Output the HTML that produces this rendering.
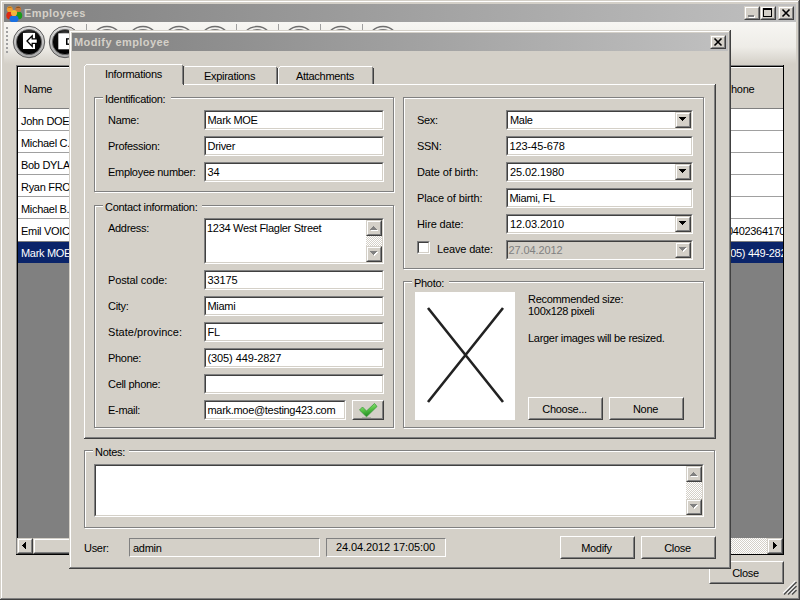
<!DOCTYPE html><html><head><meta charset="utf-8"><style>
html,body{margin:0;padding:0;width:800px;height:600px;overflow:hidden;background:#d4d0c8}
.a{position:absolute;box-sizing:content-box}
.t{font-family:"Liberation Sans",sans-serif;font-size:11px;line-height:13px;letter-spacing:-0.3px;white-space:nowrap;color:#000}
.b{font-family:"Liberation Sans",sans-serif;font-size:11px;line-height:13px;font-weight:bold;letter-spacing:0.42px;white-space:nowrap}
</style></head><body>
<div class="a" style="left:0px;top:0px;width:800px;height:600px;background:#d4d0c8"></div>
<div class="a" style="left:1px;top:1px;width:797px;height:1px;background:#fff"></div>
<div class="a" style="left:1px;top:1px;width:1px;height:597px;background:#fff"></div>
<div class="a" style="left:798px;top:1px;width:1px;height:598px;background:#808080"></div>
<div class="a" style="left:1px;top:598px;width:798px;height:1px;background:#808080"></div>
<div class="a" style="left:799px;top:0px;width:1px;height:600px;background:#404040"></div>
<div class="a" style="left:0px;top:599px;width:800px;height:1px;background:#404040"></div>
<div class="a" style="left:4px;top:4px;width:792px;height:18px;background:linear-gradient(to right,#808080,#c0c0c0)"></div>
<div class="a b" style="left:24px;top:7px;color:#d4d0c8">Employees</div>
<svg class="a" style="left:5px;top:4px" width="18" height="18" viewBox="0 0 18 18">
<ellipse cx="4.5" cy="11.5" rx="3.2" ry="3.8" fill="#e02a10"/>
<ellipse cx="14" cy="11.5" rx="3.2" ry="3.8" fill="#1a9a1a"/>
<circle cx="4.8" cy="5.2" r="2.9" fill="#f0a030"/><path d="M2 4.5 Q4.8 0.8 7.6 4.5 Q4.8 3 2 4.5Z" fill="#b86a10"/>
<circle cx="13.2" cy="5.2" r="2.9" fill="#c87838"/><path d="M10.3 4.5 Q13.2 0.8 16 4.5 Q13.2 3 10.3 4.5Z" fill="#7a4a20"/>
<ellipse cx="9" cy="15" rx="4.6" ry="3.4" fill="#1a70e0"/>
<circle cx="9" cy="9" r="3.1" fill="#f4b040"/><path d="M5.9 8.5 Q9 4.8 12.1 8.5 Q9 6.8 5.9 8.5Z" fill="#f0d020"/>
</svg>
<div class="a" style="left:744px;top:6px;width:14px;height:12px;border:1px solid;border-color:#d4d0c8 #404040 #404040 #d4d0c8;"><div style="width:12px;height:10px;border:1px solid;border-color:#fff #808080 #808080 #fff;background:#d4d0c8"></div></div>
<div class="a" style="left:760px;top:6px;width:14px;height:12px;border:1px solid;border-color:#d4d0c8 #404040 #404040 #d4d0c8;"><div style="width:12px;height:10px;border:1px solid;border-color:#fff #808080 #808080 #fff;background:#d4d0c8"></div></div>
<div class="a" style="left:778px;top:6px;width:14px;height:12px;border:1px solid;border-color:#d4d0c8 #404040 #404040 #d4d0c8;"><div style="width:12px;height:10px;border:1px solid;border-color:#fff #808080 #808080 #fff;background:#d4d0c8"></div></div>
<div class="a" style="left:749px;top:16px;width:6px;height:2px;background:#fff"></div>
<div class="a" style="left:748px;top:15px;width:6px;height:2px;background:#808080"></div>
<div class="a" style="left:763px;top:8px;width:8px;height:8px;border:1px solid #000;border-top-width:2px;box-sizing:border-box;width:9px;height:9px"></div>
<svg class="a" style="left:778px;top:6px" width="16" height="14"><path d="M4.5 3.5 L11.5 10.5 M11.5 3.5 L4.5 10.5" stroke="#000" stroke-width="1.6"/></svg>
<div class="a" style="left:4px;top:22px;width:792px;height:42px;background:linear-gradient(to bottom,#f7f6f3 0%,#eeece7 60%,#d4d0c8 100%)"></div>
<div class="a" style="left:6px;top:27px;width:2px;height:2px;background:#a0a0a0"></div>
<div class="a" style="left:6px;top:31px;width:2px;height:2px;background:#a0a0a0"></div>
<div class="a" style="left:6px;top:35px;width:2px;height:2px;background:#a0a0a0"></div>
<div class="a" style="left:6px;top:39px;width:2px;height:2px;background:#a0a0a0"></div>
<div class="a" style="left:6px;top:43px;width:2px;height:2px;background:#a0a0a0"></div>
<div class="a" style="left:6px;top:47px;width:2px;height:2px;background:#a0a0a0"></div>
<div class="a" style="left:6px;top:51px;width:2px;height:2px;background:#a0a0a0"></div>
<svg class="a" style="left:12px;top:25px" width="34" height="34" viewBox="0 0 34 34">
<defs><linearGradient id="rg" x1="0" y1="0" x2="0" y2="1"><stop offset="0" stop-color="#dcdcdc"/><stop offset="1" stop-color="#a8a8a8"/></linearGradient>
<radialGradient id="dg" cx="0.5" cy="0.25" r="0.7"><stop offset="0" stop-color="#5a5a5a"/><stop offset="0.45" stop-color="#0a0a0a"/><stop offset="1" stop-color="#000"/></radialGradient></defs>
<circle cx="17" cy="17" r="15.7" fill="url(#rg)" stroke="#5e5e5e" stroke-width="1"/>
<circle cx="17" cy="17" r="12.6" fill="url(#dg)" stroke="#6a6a6a" stroke-width="0.8"/>
<path d="M11 8 L23 8 L23 24 L11 24 Z" fill="#fff"/>
<path d="M15 16 L20.2 10.8 L20.2 13.8 L25.4 13.8 L25.4 18.4 L20.2 18.4 L20.2 21.4 Z" fill="#fff" stroke="#000" stroke-width="1.3" stroke-linejoin="miter"/>
</svg>
<svg class="a" style="left:48px;top:25px" width="34" height="34" viewBox="0 0 34 34">
<circle cx="17" cy="17" r="15.7" fill="url(#rg)" stroke="#5e5e5e" stroke-width="1"/>
<circle cx="17" cy="17" r="12.6" fill="url(#dg)" stroke="#6a6a6a" stroke-width="0.8"/>
<path d="M10.3 8.3 L24 8.3 L24 24.3 L10.3 24.3 Z" fill="#fff"/>
<rect x="18" y="13.2" width="6" height="6.7" fill="#000"/>
<rect x="19.5" y="14.5" width="4.5" height="4" fill="#fff"/>
</svg>
<svg class="a" style="left:90px;top:25px" width="34" height="34" viewBox="0 0 34 34">
<circle cx="17" cy="17" r="15.5" fill="#f2f1ee" stroke="#6e6e6e" stroke-width="1.3"/>
<circle cx="17" cy="17.5" r="12.8" fill="none" stroke="#7a7a7a" stroke-width="1.2"/>
</svg>
<svg class="a" style="left:126px;top:25px" width="34" height="34" viewBox="0 0 34 34">
<circle cx="17" cy="17" r="15.5" fill="#f2f1ee" stroke="#6e6e6e" stroke-width="1.3"/>
<circle cx="17" cy="17.5" r="12.8" fill="none" stroke="#7a7a7a" stroke-width="1.2"/>
</svg>
<svg class="a" style="left:162px;top:25px" width="34" height="34" viewBox="0 0 34 34">
<circle cx="17" cy="17" r="15.5" fill="#f2f1ee" stroke="#6e6e6e" stroke-width="1.3"/>
<circle cx="17" cy="17.5" r="12.8" fill="none" stroke="#7a7a7a" stroke-width="1.2"/>
</svg>
<svg class="a" style="left:198px;top:25px" width="34" height="34" viewBox="0 0 34 34">
<circle cx="17" cy="17" r="15.5" fill="#f2f1ee" stroke="#6e6e6e" stroke-width="1.3"/>
<circle cx="17" cy="17.5" r="12.8" fill="none" stroke="#7a7a7a" stroke-width="1.2"/>
</svg>
<svg class="a" style="left:240px;top:25px" width="34" height="34" viewBox="0 0 34 34">
<circle cx="17" cy="17" r="15.5" fill="#f2f1ee" stroke="#6e6e6e" stroke-width="1.3"/>
<circle cx="17" cy="17.5" r="12.8" fill="none" stroke="#7a7a7a" stroke-width="1.2"/>
</svg>
<svg class="a" style="left:282px;top:25px" width="34" height="34" viewBox="0 0 34 34">
<circle cx="17" cy="17" r="15.5" fill="#f2f1ee" stroke="#6e6e6e" stroke-width="1.3"/>
<circle cx="17" cy="17.5" r="12.8" fill="none" stroke="#7a7a7a" stroke-width="1.2"/>
</svg>
<svg class="a" style="left:324px;top:25px" width="34" height="34" viewBox="0 0 34 34">
<circle cx="17" cy="17" r="15.5" fill="#f2f1ee" stroke="#6e6e6e" stroke-width="1.3"/>
<circle cx="17" cy="17.5" r="12.8" fill="none" stroke="#7a7a7a" stroke-width="1.2"/>
</svg>
<svg class="a" style="left:366px;top:25px" width="34" height="34" viewBox="0 0 34 34">
<circle cx="17" cy="17" r="15.5" fill="#f2f1ee" stroke="#6e6e6e" stroke-width="1.3"/>
<circle cx="17" cy="17.5" r="12.8" fill="none" stroke="#7a7a7a" stroke-width="1.2"/>
</svg>
<div class="a" style="left:86px;top:24px;width:1px;height:6px;background:#a0a0a0"></div>
<div class="a" style="left:236px;top:24px;width:1px;height:6px;background:#a0a0a0"></div>
<div class="a" style="left:278px;top:24px;width:1px;height:6px;background:#a0a0a0"></div>
<div class="a" style="left:320px;top:24px;width:1px;height:6px;background:#a0a0a0"></div>
<div class="a" style="left:362px;top:24px;width:1px;height:6px;background:#a0a0a0"></div>
<div class="a" style="left:16px;top:65px;width:768px;height:490px;background:#808080"></div>
<div class="a" style="left:16px;top:65px;width:768px;height:1px;background:#808080"></div>
<div class="a" style="left:16px;top:65px;width:1px;height:490px;background:#808080"></div>
<div class="a" style="left:17px;top:66px;width:766px;height:1px;background:#000"></div>
<div class="a" style="left:17px;top:66px;width:1px;height:489px;background:#000"></div>
<div class="a" style="left:783px;top:65px;width:1px;height:490px;background:#000"></div>
<div class="a" style="left:16px;top:554px;width:768px;height:1px;background:#000"></div>
<div class="a" style="left:18px;top:67px;width:765px;height:42px;background:#d4d0c8"></div>
<div class="a" style="left:18px;top:67px;width:765px;height:1px;background:#fff"></div>
<div class="a" style="left:18px;top:67px;width:1px;height:41px;background:#fff"></div>
<div class="a" style="left:18px;top:108px;width:765px;height:1px;background:#808080"></div>
<div class="a t" style="left:24px;top:83px;">Name</div>
<div class="a t" style="left:731px;top:83px;">hone</div>
<div class="a" style="left:18px;top:109px;width:765px;height:22px;background:#fff"></div>
<div class="a" style="left:18px;top:130px;width:765px;height:1px;background:#a0a0a0"></div>
<div class="a t" style="left:21px;top:114.5px;">John DOE</div>
<div class="a" style="left:18px;top:131px;width:765px;height:22px;background:#fff"></div>
<div class="a" style="left:18px;top:152px;width:765px;height:1px;background:#a0a0a0"></div>
<div class="a t" style="left:21px;top:136.5px;">Michael C.</div>
<div class="a" style="left:18px;top:153px;width:765px;height:22px;background:#fff"></div>
<div class="a" style="left:18px;top:174px;width:765px;height:1px;background:#a0a0a0"></div>
<div class="a t" style="left:21px;top:158.5px;">Bob DYLAN</div>
<div class="a" style="left:18px;top:175px;width:765px;height:22px;background:#fff"></div>
<div class="a" style="left:18px;top:196px;width:765px;height:1px;background:#a0a0a0"></div>
<div class="a t" style="left:21px;top:180.5px;">Ryan FROST</div>
<div class="a" style="left:18px;top:197px;width:765px;height:22px;background:#fff"></div>
<div class="a" style="left:18px;top:218px;width:765px;height:1px;background:#a0a0a0"></div>
<div class="a t" style="left:21px;top:202.5px;">Michael B.</div>
<div class="a" style="left:18px;top:219px;width:765px;height:22px;background:#fff"></div>
<div class="a t" style="left:21px;top:224.5px;">Emil VOICU</div>
<div class="a" style="left:18px;top:242px;width:765px;height:21px;background:#0a246a"></div>
<div class="a t" style="left:21px;top:246.5px;color:#fff">Mark MOE</div>
<div class="a" style="left:700px;top:100px;width:83px;height:180px;overflow:hidden">
<div class="a t" style="left:27px;top:124.5px;">0402364170</div>
<div class="a t" style="left:21px;top:146.5px;color:#fff">(305) 449-2827</div>
</div>
<div class="a" style="left:17px;top:538px;width:766px;height:16px;background-color:#fff;background-image:repeating-conic-gradient(#d4d0c8 0 25%,#fff 0 50%);background-size:2px 2px"></div>
<div class="a" style="left:17px;top:538px;width:14px;height:14px;border:1px solid;border-color:#d4d0c8 #404040 #404040 #d4d0c8;"><div style="width:12px;height:12px;border:1px solid;border-color:#fff #808080 #808080 #fff;background:#d4d0c8"></div></div>
<div class="a" style="left:22px;top:545px;width:1px;height:1px;background:#000"></div>
<div class="a" style="left:23px;top:544px;width:1px;height:3px;background:#000"></div>
<div class="a" style="left:24px;top:543px;width:1px;height:5px;background:#000"></div>
<div class="a" style="left:25px;top:542px;width:1px;height:7px;background:#000"></div>
<div class="a" style="left:33px;top:538px;width:498px;height:14px;border:1px solid;border-color:#d4d0c8 #404040 #404040 #d4d0c8;"><div style="width:496px;height:12px;border:1px solid;border-color:#fff #808080 #808080 #fff;background:#d4d0c8"></div></div>
<div class="a" style="left:767px;top:538px;width:14px;height:14px;border:1px solid;border-color:#d4d0c8 #404040 #404040 #d4d0c8;"><div style="width:12px;height:12px;border:1px solid;border-color:#fff #808080 #808080 #fff;background:#d4d0c8"></div></div>
<div class="a" style="left:773px;top:542px;width:1px;height:7px;background:#000"></div>
<div class="a" style="left:774px;top:543px;width:1px;height:5px;background:#000"></div>
<div class="a" style="left:775px;top:544px;width:1px;height:3px;background:#000"></div>
<div class="a" style="left:776px;top:545px;width:1px;height:1px;background:#000"></div>
<div class="a" style="left:709px;top:561px;width:73px;height:21px;border:1px solid;border-color:#fff #404040 #404040 #fff;"><div style="width:71px;height:19px;border:1px solid;border-color:#d4d0c8 #808080 #808080 #d4d0c8;background:#d4d0c8"></div></div>
<div class="a t" style="left:708px;width:75px;text-align:center;top:567px;">Close</div>
<svg class="a" style="left:782px;top:580px" width="16" height="16">
<path d="M1 13.5 L13.5 1 M5 13.5 L13.5 5 M9 13.5 L13.5 9" stroke="#fff" stroke-width="1.2"/>
<path d="M2 14.5 L14.5 2 M6 14.5 L14.5 6 M10 14.5 L14.5 10" stroke="#505050" stroke-width="1.6"/>
</svg>
<div class="a" style="left:69px;top:30px;width:662px;height:539px;background:#d4d0c8"></div>
<div class="a" style="left:70px;top:31px;width:660px;height:1px;background:#fff"></div>
<div class="a" style="left:70px;top:31px;width:1px;height:537px;background:#fff"></div>
<div class="a" style="left:729px;top:31px;width:1px;height:537px;background:#808080"></div>
<div class="a" style="left:70px;top:567px;width:660px;height:1px;background:#808080"></div>
<div class="a" style="left:730px;top:30px;width:1px;height:539px;background:#404040"></div>
<div class="a" style="left:69px;top:568px;width:662px;height:1px;background:#404040"></div>
<div class="a" style="left:72px;top:33px;width:656px;height:18px;background:linear-gradient(to right,#808080,#c0c0c0)"></div>
<div class="a b" style="left:74px;top:36px;color:#d4d0c8">Modify employee</div>
<div class="a" style="left:710px;top:35px;width:14px;height:12px;border:1px solid;border-color:#d4d0c8 #404040 #404040 #d4d0c8;"><div style="width:12px;height:10px;border:1px solid;border-color:#fff #808080 #808080 #fff;background:#d4d0c8"></div></div>
<svg class="a" style="left:710px;top:35px" width="16" height="14"><path d="M4.5 3.5 L11.5 10.5 M11.5 3.5 L4.5 10.5" stroke="#000" stroke-width="1.6"/></svg>
<div class="a" style="left:84px;top:84px;width:632px;height:355px;background:#d4d0c8"></div>
<div class="a" style="left:84px;top:84px;width:631px;height:1px;background:#fff"></div>
<div class="a" style="left:84px;top:84px;width:1px;height:354px;background:#fff"></div>
<div class="a" style="left:714px;top:85px;width:1px;height:353px;background:#808080"></div>
<div class="a" style="left:85px;top:437px;width:630px;height:1px;background:#808080"></div>
<div class="a" style="left:715px;top:84px;width:1px;height:355px;background:#404040"></div>
<div class="a" style="left:84px;top:438px;width:632px;height:1px;background:#404040"></div>
<div class="a" style="left:183px;top:66px;width:95px;height:18px;background:#d4d0c8"></div>
<div class="a" style="left:185px;top:66px;width:91px;height:1px;background:#fff"></div>
<div class="a" style="left:276px;top:67px;width:1px;height:17px;background:#808080"></div>
<div class="a" style="left:277px;top:68px;width:1px;height:16px;background:#404040"></div>
<div class="a t" style="left:204px;top:70px;">Expirations</div>
<div class="a" style="left:278px;top:66px;width:96px;height:18px;background:#d4d0c8"></div>
<div class="a" style="left:280px;top:66px;width:92px;height:1px;background:#fff"></div>
<div class="a" style="left:278px;top:68px;width:1px;height:16px;background:#fff"></div>
<div class="a" style="left:279px;top:67px;width:1px;height:1px;background:#fff"></div>
<div class="a" style="left:372px;top:67px;width:1px;height:17px;background:#808080"></div>
<div class="a" style="left:373px;top:68px;width:1px;height:16px;background:#404040"></div>
<div class="a t" style="left:296px;top:70px;">Attachments</div>
<div class="a" style="left:84px;top:64px;width:100px;height:21px;background:#d4d0c8"></div>
<div class="a" style="left:86px;top:64px;width:96px;height:1px;background:#fff"></div>
<div class="a" style="left:84px;top:66px;width:1px;height:19px;background:#fff"></div>
<div class="a" style="left:85px;top:65px;width:1px;height:1px;background:#fff"></div>
<div class="a" style="left:182px;top:65px;width:1px;height:20px;background:#808080"></div>
<div class="a" style="left:183px;top:66px;width:1px;height:19px;background:#404040"></div>
<div class="a t" style="left:105px;top:68px;">Informations</div>
<div class="a" style="left:85px;top:84px;width:98px;height:2px;background:#d4d0c8"></div>
<div class="a" style="left:95px;top:98px;width:298px;height:93px;border:1px solid #fff"></div>
<div class="a" style="left:94px;top:97px;width:298px;height:93px;border:1px solid #808080"></div>
<div class="a" style="left:103px;top:96px;width:68px;height:4px;background:#d4d0c8"></div>
<div class="a t" style="left:105px;top:93px;">Identification:</div>
<div class="a t" style="left:108px;top:113.5px;">Name:</div>
<div class="a" style="left:204px;top:110px;width:178px;height:18px;border:1px solid;border-color:#808080 #fff #fff #808080;"><div style="width:176px;height:16px;border:1px solid;border-color:#404040 #d4d0c8 #d4d0c8 #404040;background:#fff"></div></div>
<div class="a t" style="left:207.5px;top:114px;color:#000">Mark MOE</div>
<div class="a t" style="left:108px;top:139.5px;">Profession:</div>
<div class="a" style="left:204px;top:136px;width:178px;height:18px;border:1px solid;border-color:#808080 #fff #fff #808080;"><div style="width:176px;height:16px;border:1px solid;border-color:#404040 #d4d0c8 #d4d0c8 #404040;background:#fff"></div></div>
<div class="a t" style="left:207.5px;top:140px;color:#000">Driver</div>
<div class="a t" style="left:108px;top:165.5px;">Employee number:</div>
<div class="a" style="left:204px;top:162px;width:178px;height:18px;border:1px solid;border-color:#808080 #fff #fff #808080;"><div style="width:176px;height:16px;border:1px solid;border-color:#404040 #d4d0c8 #d4d0c8 #404040;background:#fff"></div></div>
<div class="a t" style="left:207.5px;top:166px;color:#000;letter-spacing:-0.1px">34</div>
<div class="a" style="left:95px;top:206px;width:298px;height:221px;border:1px solid #fff"></div>
<div class="a" style="left:94px;top:205px;width:298px;height:221px;border:1px solid #808080"></div>
<div class="a" style="left:103px;top:204px;width:99px;height:4px;background:#d4d0c8"></div>
<div class="a t" style="left:105px;top:201px;">Contact information:</div>
<div class="a t" style="left:108px;top:221.5px;">Address:</div>
<div class="a" style="left:204px;top:218px;width:178px;height:44px;border:1px solid;border-color:#808080 #fff #fff #808080;"><div style="width:176px;height:42px;border:1px solid;border-color:#404040 #d4d0c8 #d4d0c8 #404040;background:#fff"></div></div>
<div class="a t" style="left:207px;top:222px;">1234 West Flagler Street</div>
<div class="a" style="left:366px;top:220px;width:16px;height:42px;background-color:#fff;background-image:repeating-conic-gradient(#d4d0c8 0 25%,#fff 0 50%);background-size:2px 2px"></div>
<div class="a" style="left:366px;top:220px;width:14px;height:14px;border:1px solid;border-color:#d4d0c8 #404040 #404040 #d4d0c8;"><div style="width:12px;height:12px;border:1px solid;border-color:#fff #808080 #808080 #fff;background:#d4d0c8"></div></div>
<div class="a" style="left:374px;top:227px;width:1px;height:1px;background:#fff"></div>
<div class="a" style="left:373px;top:226px;width:1px;height:1px;background:#808080"></div>
<div class="a" style="left:373px;top:228px;width:3px;height:1px;background:#fff"></div>
<div class="a" style="left:372px;top:227px;width:3px;height:1px;background:#808080"></div>
<div class="a" style="left:372px;top:229px;width:5px;height:1px;background:#fff"></div>
<div class="a" style="left:371px;top:228px;width:5px;height:1px;background:#808080"></div>
<div class="a" style="left:371px;top:230px;width:7px;height:1px;background:#fff"></div>
<div class="a" style="left:370px;top:229px;width:7px;height:1px;background:#808080"></div>
<div class="a" style="left:366px;top:246px;width:14px;height:14px;border:1px solid;border-color:#d4d0c8 #404040 #404040 #d4d0c8;"><div style="width:12px;height:12px;border:1px solid;border-color:#fff #808080 #808080 #fff;background:#d4d0c8"></div></div>
<div class="a" style="left:371px;top:252px;width:7px;height:1px;background:#fff"></div>
<div class="a" style="left:370px;top:251px;width:7px;height:1px;background:#808080"></div>
<div class="a" style="left:372px;top:253px;width:5px;height:1px;background:#fff"></div>
<div class="a" style="left:371px;top:252px;width:5px;height:1px;background:#808080"></div>
<div class="a" style="left:373px;top:254px;width:3px;height:1px;background:#fff"></div>
<div class="a" style="left:372px;top:253px;width:3px;height:1px;background:#808080"></div>
<div class="a" style="left:374px;top:255px;width:1px;height:1px;background:#fff"></div>
<div class="a" style="left:373px;top:254px;width:1px;height:1px;background:#808080"></div>
<div class="a t" style="left:108px;top:273.5px;letter-spacing:-0.12px">Postal code:</div>
<div class="a" style="left:204px;top:270px;width:178px;height:18px;border:1px solid;border-color:#808080 #fff #fff #808080;"><div style="width:176px;height:16px;border:1px solid;border-color:#404040 #d4d0c8 #d4d0c8 #404040;background:#fff"></div></div>
<div class="a t" style="left:207.5px;top:274px;color:#000;letter-spacing:-0.1px">33175</div>
<div class="a t" style="left:108px;top:299.5px;">City:</div>
<div class="a" style="left:204px;top:296px;width:178px;height:18px;border:1px solid;border-color:#808080 #fff #fff #808080;"><div style="width:176px;height:16px;border:1px solid;border-color:#404040 #d4d0c8 #d4d0c8 #404040;background:#fff"></div></div>
<div class="a t" style="left:207.5px;top:300px;color:#000">Miami</div>
<div class="a t" style="left:108px;top:325.5px;letter-spacing:0.05px">State/province:</div>
<div class="a" style="left:204px;top:322px;width:178px;height:18px;border:1px solid;border-color:#808080 #fff #fff #808080;"><div style="width:176px;height:16px;border:1px solid;border-color:#404040 #d4d0c8 #d4d0c8 #404040;background:#fff"></div></div>
<div class="a t" style="left:207.5px;top:326px;color:#000">FL</div>
<div class="a t" style="left:108px;top:351.5px;">Phone:</div>
<div class="a" style="left:204px;top:348px;width:178px;height:18px;border:1px solid;border-color:#808080 #fff #fff #808080;"><div style="width:176px;height:16px;border:1px solid;border-color:#404040 #d4d0c8 #d4d0c8 #404040;background:#fff"></div></div>
<div class="a t" style="left:207.5px;top:352px;color:#000;letter-spacing:-0.1px">(305) 449-2827</div>
<div class="a t" style="left:108px;top:377.5px;">Cell phone:</div>
<div class="a" style="left:204px;top:374px;width:178px;height:18px;border:1px solid;border-color:#808080 #fff #fff #808080;"><div style="width:176px;height:16px;border:1px solid;border-color:#404040 #d4d0c8 #d4d0c8 #404040;background:#fff"></div></div>
<div class="a t" style="left:108px;top:403.5px;">E-mail:</div>
<div class="a" style="left:204px;top:400px;width:140px;height:18px;border:1px solid;border-color:#808080 #fff #fff #808080;"><div style="width:138px;height:16px;border:1px solid;border-color:#404040 #d4d0c8 #d4d0c8 #404040;background:#fff"></div></div>
<div class="a t" style="left:207.5px;top:404px;color:#000">mark.moe@testing423.com</div>
<div class="a" style="left:352px;top:400px;width:30px;height:18px;border:1px solid;border-color:#fff #404040 #404040 #fff;"><div style="width:28px;height:16px;border:1px solid;border-color:#d4d0c8 #808080 #808080 #d4d0c8;background:#d4d0c8"></div></div>
<svg class="a" style="left:352px;top:400px" width="32" height="20" viewBox="0 0 32 20">
<defs><linearGradient id="cg" x1="0" y1="0" x2="0.3" y2="1"><stop offset="0" stop-color="#b8f0a0"/><stop offset="0.5" stop-color="#5cc84a"/><stop offset="1" stop-color="#1f8a1f"/></linearGradient></defs>
<path d="M7.5 10 L10.5 7 L14.5 11 L22.5 3.5 L25 6.5 L14.5 16.8 Z" fill="url(#cg)" stroke="#3a9a3a" stroke-width="0.8" stroke-linejoin="round"/>
<path d="M10 17.5 L19 17.5" stroke="#9a9a90" stroke-width="1" opacity="0.6"/>
</svg>
<div class="a" style="left:404px;top:98px;width:299px;height:170px;border:1px solid #fff"></div>
<div class="a" style="left:403px;top:97px;width:299px;height:170px;border:1px solid #808080"></div>
<div class="a t" style="left:417px;top:113.5px;">Sex:</div>
<div class="a" style="left:506px;top:110px;width:185px;height:18px;border:1px solid;border-color:#808080 #fff #fff #808080;"><div style="width:183px;height:16px;border:1px solid;border-color:#404040 #d4d0c8 #d4d0c8 #404040;background:#fff"></div></div>
<div class="a t" style="left:510px;top:114px;color:#000">Male</div>
<div class="a" style="left:675px;top:112px;width:14px;height:14px;border:1px solid;border-color:#d4d0c8 #404040 #404040 #d4d0c8;"><div style="width:12px;height:12px;border:1px solid;border-color:#fff #808080 #808080 #fff;background:#d4d0c8"></div></div>
<div class="a" style="left:679px;top:117px;width:7px;height:1px;background:#000"></div>
<div class="a" style="left:680px;top:118px;width:5px;height:1px;background:#000"></div>
<div class="a" style="left:681px;top:119px;width:3px;height:1px;background:#000"></div>
<div class="a" style="left:682px;top:120px;width:1px;height:1px;background:#000"></div>
<div class="a t" style="left:417px;top:139.5px;">SSN:</div>
<div class="a" style="left:506px;top:136px;width:185px;height:18px;border:1px solid;border-color:#808080 #fff #fff #808080;"><div style="width:183px;height:16px;border:1px solid;border-color:#404040 #d4d0c8 #d4d0c8 #404040;background:#fff"></div></div>
<div class="a t" style="left:509.5px;top:140px;color:#000;letter-spacing:-0.1px">123-45-678</div>
<div class="a t" style="left:417px;top:165.5px;letter-spacing:-0.12px">Date of birth:</div>
<div class="a" style="left:506px;top:162px;width:185px;height:18px;border:1px solid;border-color:#808080 #fff #fff #808080;"><div style="width:183px;height:16px;border:1px solid;border-color:#404040 #d4d0c8 #d4d0c8 #404040;background:#fff"></div></div>
<div class="a t" style="left:510px;top:166px;color:#000;letter-spacing:-0.1px">25.02.1980</div>
<div class="a" style="left:675px;top:164px;width:14px;height:14px;border:1px solid;border-color:#d4d0c8 #404040 #404040 #d4d0c8;"><div style="width:12px;height:12px;border:1px solid;border-color:#fff #808080 #808080 #fff;background:#d4d0c8"></div></div>
<div class="a" style="left:679px;top:169px;width:7px;height:1px;background:#000"></div>
<div class="a" style="left:680px;top:170px;width:5px;height:1px;background:#000"></div>
<div class="a" style="left:681px;top:171px;width:3px;height:1px;background:#000"></div>
<div class="a" style="left:682px;top:172px;width:1px;height:1px;background:#000"></div>
<div class="a t" style="left:417px;top:191.5px;letter-spacing:-0.12px">Place of birth:</div>
<div class="a" style="left:506px;top:188px;width:185px;height:18px;border:1px solid;border-color:#808080 #fff #fff #808080;"><div style="width:183px;height:16px;border:1px solid;border-color:#404040 #d4d0c8 #d4d0c8 #404040;background:#fff"></div></div>
<div class="a t" style="left:509.5px;top:192px;color:#000">Miami, FL</div>
<div class="a t" style="left:417px;top:217.5px;letter-spacing:-0.12px">Hire date:</div>
<div class="a" style="left:506px;top:214px;width:185px;height:18px;border:1px solid;border-color:#808080 #fff #fff #808080;"><div style="width:183px;height:16px;border:1px solid;border-color:#404040 #d4d0c8 #d4d0c8 #404040;background:#fff"></div></div>
<div class="a t" style="left:510px;top:218px;color:#000;letter-spacing:-0.1px">12.03.2010</div>
<div class="a" style="left:675px;top:216px;width:14px;height:14px;border:1px solid;border-color:#d4d0c8 #404040 #404040 #d4d0c8;"><div style="width:12px;height:12px;border:1px solid;border-color:#fff #808080 #808080 #fff;background:#d4d0c8"></div></div>
<div class="a" style="left:679px;top:221px;width:7px;height:1px;background:#000"></div>
<div class="a" style="left:680px;top:222px;width:5px;height:1px;background:#000"></div>
<div class="a" style="left:681px;top:223px;width:3px;height:1px;background:#000"></div>
<div class="a" style="left:682px;top:224px;width:1px;height:1px;background:#000"></div>
<div class="a" style="left:417px;top:241px;width:11px;height:11px;border:1px solid;border-color:#808080 #fff #fff #808080;"><div style="width:9px;height:9px;border:1px solid;border-color:#404040 #d4d0c8 #d4d0c8 #404040;background:#fff"></div></div>
<div class="a t" style="left:437px;top:243px;letter-spacing:-0.15px">Leave date:</div>
<div class="a" style="left:506px;top:240px;width:185px;height:18px;border:1px solid;border-color:#808080 #fff #fff #808080;"><div style="width:183px;height:16px;border:1px solid;border-color:#404040 #d4d0c8 #d4d0c8 #404040;background:#d4d0c8"></div></div>
<div class="a t" style="left:508.5px;top:244px;color:#808080;letter-spacing:-0.1px">27.04.2012</div>
<div class="a" style="left:675px;top:242px;width:14px;height:14px;border:1px solid;border-color:#d4d0c8 #404040 #404040 #d4d0c8;"><div style="width:12px;height:12px;border:1px solid;border-color:#fff #808080 #808080 #fff;background:#d4d0c8"></div></div>
<div class="a" style="left:680px;top:248px;width:7px;height:1px;background:#fff"></div>
<div class="a" style="left:679px;top:247px;width:7px;height:1px;background:#808080"></div>
<div class="a" style="left:681px;top:249px;width:5px;height:1px;background:#fff"></div>
<div class="a" style="left:680px;top:248px;width:5px;height:1px;background:#808080"></div>
<div class="a" style="left:682px;top:250px;width:3px;height:1px;background:#fff"></div>
<div class="a" style="left:681px;top:249px;width:3px;height:1px;background:#808080"></div>
<div class="a" style="left:683px;top:251px;width:1px;height:1px;background:#fff"></div>
<div class="a" style="left:682px;top:250px;width:1px;height:1px;background:#808080"></div>
<div class="a" style="left:404px;top:282px;width:299px;height:145px;border:1px solid #fff"></div>
<div class="a" style="left:403px;top:281px;width:299px;height:145px;border:1px solid #808080"></div>
<div class="a" style="left:412px;top:280px;width:37px;height:4px;background:#d4d0c8"></div>
<div class="a t" style="left:414px;top:277px;">Photo:</div>
<div class="a" style="left:415px;top:292px;width:100px;height:128px;background:#fff"></div>
<svg class="a" style="left:415px;top:292px" width="100" height="128"><path d="M13 16 L88 110 M88 16 L13 110" stroke="#222" stroke-width="2.6"/></svg>
<div class="a t" style="left:528px;top:293px;">Recommended size:</div>
<div class="a t" style="left:528px;top:305px;">100x128 pixeli</div>
<div class="a t" style="left:528px;top:332px;">Larger images will be resized.</div>
<div class="a" style="left:528px;top:397px;width:73px;height:21px;border:1px solid;border-color:#fff #404040 #404040 #fff;"><div style="width:71px;height:19px;border:1px solid;border-color:#d4d0c8 #808080 #808080 #d4d0c8;background:#d4d0c8"></div></div>
<div class="a t" style="left:527px;width:75px;text-align:center;top:403px;">Choose...</div>
<div class="a" style="left:609px;top:397px;width:73px;height:21px;border:1px solid;border-color:#fff #404040 #404040 #fff;"><div style="width:71px;height:19px;border:1px solid;border-color:#d4d0c8 #808080 #808080 #d4d0c8;background:#d4d0c8"></div></div>
<div class="a t" style="left:608px;width:75px;text-align:center;top:403px;">None</div>
<div class="a" style="left:85px;top:451px;width:629px;height:76px;border:1px solid #fff"></div>
<div class="a" style="left:84px;top:450px;width:629px;height:76px;border:1px solid #808080"></div>
<div class="a" style="left:93px;top:449px;width:36px;height:4px;background:#d4d0c8"></div>
<div class="a t" style="left:95px;top:446px;">Notes:</div>
<div class="a" style="left:94px;top:464px;width:608px;height:51px;border:1px solid;border-color:#808080 #fff #fff #808080;"><div style="width:606px;height:49px;border:1px solid;border-color:#404040 #d4d0c8 #d4d0c8 #404040;background:#fff"></div></div>
<div class="a" style="left:686px;top:466px;width:16px;height:49px;background-color:#fff;background-image:repeating-conic-gradient(#d4d0c8 0 25%,#fff 0 50%);background-size:2px 2px"></div>
<div class="a" style="left:686px;top:466px;width:14px;height:14px;border:1px solid;border-color:#d4d0c8 #404040 #404040 #d4d0c8;"><div style="width:12px;height:12px;border:1px solid;border-color:#fff #808080 #808080 #fff;background:#d4d0c8"></div></div>
<div class="a" style="left:694px;top:473px;width:1px;height:1px;background:#fff"></div>
<div class="a" style="left:693px;top:472px;width:1px;height:1px;background:#808080"></div>
<div class="a" style="left:693px;top:474px;width:3px;height:1px;background:#fff"></div>
<div class="a" style="left:692px;top:473px;width:3px;height:1px;background:#808080"></div>
<div class="a" style="left:692px;top:475px;width:5px;height:1px;background:#fff"></div>
<div class="a" style="left:691px;top:474px;width:5px;height:1px;background:#808080"></div>
<div class="a" style="left:691px;top:476px;width:7px;height:1px;background:#fff"></div>
<div class="a" style="left:690px;top:475px;width:7px;height:1px;background:#808080"></div>
<div class="a" style="left:686px;top:499px;width:14px;height:14px;border:1px solid;border-color:#d4d0c8 #404040 #404040 #d4d0c8;"><div style="width:12px;height:12px;border:1px solid;border-color:#fff #808080 #808080 #fff;background:#d4d0c8"></div></div>
<div class="a" style="left:691px;top:505px;width:7px;height:1px;background:#fff"></div>
<div class="a" style="left:690px;top:504px;width:7px;height:1px;background:#808080"></div>
<div class="a" style="left:692px;top:506px;width:5px;height:1px;background:#fff"></div>
<div class="a" style="left:691px;top:505px;width:5px;height:1px;background:#808080"></div>
<div class="a" style="left:693px;top:507px;width:3px;height:1px;background:#fff"></div>
<div class="a" style="left:692px;top:506px;width:3px;height:1px;background:#808080"></div>
<div class="a" style="left:694px;top:508px;width:1px;height:1px;background:#fff"></div>
<div class="a" style="left:693px;top:507px;width:1px;height:1px;background:#808080"></div>
<div class="a t" style="left:84px;top:542px;">User:</div>
<div class="a" style="left:129px;top:538px;width:189px;height:17px;border:1px solid;border-color:#808080 #fff #fff #808080;background:#d4d0c8"></div>
<div class="a t" style="left:133px;top:542px;">admin</div>
<div class="a" style="left:326px;top:538px;width:118px;height:17px;border:1px solid;border-color:#808080 #fff #fff #808080;background:#d4d0c8"></div>
<div class="a t" style="left:336px;top:541px;letter-spacing:-0.1px">24.04.2012 17:05:00</div>
<div class="a" style="left:560px;top:536px;width:73px;height:21px;border:1px solid;border-color:#fff #404040 #404040 #fff;"><div style="width:71px;height:19px;border:1px solid;border-color:#d4d0c8 #808080 #808080 #d4d0c8;background:#d4d0c8"></div></div>
<div class="a t" style="left:559px;width:75px;text-align:center;top:542px;">Modify</div>
<div class="a" style="left:641px;top:536px;width:73px;height:21px;border:1px solid;border-color:#fff #404040 #404040 #fff;"><div style="width:71px;height:19px;border:1px solid;border-color:#d4d0c8 #808080 #808080 #d4d0c8;background:#d4d0c8"></div></div>
<div class="a t" style="left:640px;width:75px;text-align:center;top:542px;">Close</div>
</body></html>
